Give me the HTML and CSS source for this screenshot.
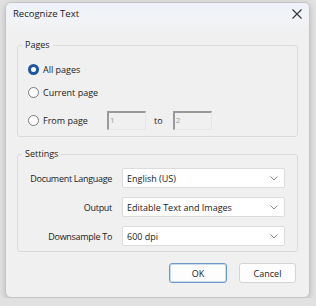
FILE: index.html
```html
<!DOCTYPE html>
<html lang="en">
<head>
    <meta charset="UTF-8">
    <meta name="viewport" content="width=device-width, initial-scale=1.0">
    <title>Recognize Text</title>
    <link rel="stylesheet" href="styles.css">
</head>
<body>
    <div class="window">
        <header class="titlebar">
            <span class="title">Recognize Text</span>
            <svg class="close" width="10" height="10" viewBox="0 0 10 10">
                <path d="M0.5 0.5 L9.5 9.5 M9.5 0.5 L0.5 9.5" stroke="#333" stroke-width="1.1" fill="none"/>
            </svg>
        </header>

        <div class="content">
            <fieldset class="group pages">
                <legend>Pages</legend>
                <div class="radio-row">
                    <span class="radio checked"></span>
                    <span>All pages</span>
                </div>
                <div class="radio-row">
                    <span class="radio"></span>
                    <span>Current page</span>
                </div>
                <div class="radio-row range">
                    <span class="radio"></span>
                    <span class="from-label">From page</span>
                    <span class="num-box">1</span>
                    <span class="to-label">to</span>
                    <span class="num-box">2</span>
                </div>
            </fieldset>

            <fieldset class="group settings">
                <legend>Settings</legend>
                <div class="settings-grid">
                    <label>Document Language</label>
                    <div class="select">
                        <span>English (US)</span>
                        <svg width="8" height="5" viewBox="0 0 8 5"><path d="M0.5 0.5 L4 4 L7.5 0.5" stroke="#888" fill="none"/></svg>
                    </div>

                    <label>Output</label>
                    <div class="select">
                        <span>Editable Text and Images</span>
                        <svg width="8" height="5" viewBox="0 0 8 5"><path d="M0.5 0.5 L4 4 L7.5 0.5" stroke="#888" fill="none"/></svg>
                    </div>

                    <label>Downsample To</label>
                    <div class="select">
                        <span>600 dpi</span>
                        <svg width="8" height="5" viewBox="0 0 8 5"><path d="M0.5 0.5 L4 4 L7.5 0.5" stroke="#888" fill="none"/></svg>
                    </div>
                </div>
            </fieldset>

            <div class="buttons">
                <button class="btn default">OK</button>
                <button class="btn">Cancel</button>
            </div>
        </div>
    </div>
</body>
</html>
```

FILE: styles.css
```css
body {
    margin: 0;
    padding: 2px 0 0 5px;
    background-color: #e1e1e1;
    font-family: "Open Sans", "Noto Sans", sans-serif;
    font-size: 9px;
    color: #1a1a1a;
}

.window {
    width: 303px;
    height: 294px;
    border: 1px solid #c4c4c4;
    border-radius: 6px;
    background: #f0f0f0;
    box-shadow: 0 2px 6px rgba(0, 0, 0, 0.18);
    overflow: hidden;
}

.titlebar {
    height: 27px;
    display: flex;
    align-items: center;
    justify-content: space-between;
    padding: 0 6px 0 7px;
    background: linear-gradient(#eef2f8, #f1f3f6 70%, #f0f0f0);
}

.title {
    font-size: 9.5px;
    margin-top: -6px;
}

.close {
    margin-right: 1px;
    margin-top: -5px;
}

.content {
    padding: 8px 11px 0 11px;
}

.group {
    margin: 0;
    padding: 0 4px 5px 4px;
    border: 1px solid #dadada;
    border-radius: 3px;
}

.group legend {
    padding: 0 3px;
    line-height: 14px;
    color: #222;
}

.pages {
    padding-bottom: 6px;
}

.radio-row {
    display: flex;
    align-items: center;
    height: 20px;
    padding-left: 6px;
    margin-top: 3px;
    white-space: nowrap;
}

.radio-row:first-of-type {
    margin-top: 7px;
}

.radio-row.range {
    margin-top: 8px;
}

.radio {
    width: 9px;
    height: 9px;
    border: 1px solid #7a7a7a;
    border-radius: 50%;
    background: #fff;
    margin-right: 4px;
}

.radio.checked {
    width: 5px;
    height: 5px;
    border: 3px solid #1c56a6;
    background: #fff;
}

.from-label {
    width: 64px;
}

.num-box {
    width: 35px;
    height: 16px;
    border-top: 2px solid #9a9a9a;
    border-left: 2px solid #9a9a9a;
    border-right: 1px solid #e6e6e6;
    border-bottom: 1px solid #e6e6e6;
    background: #f0f0f0;
    color: #9a9a9a;
    font-size: 8px;
    line-height: 14px;
    padding-left: 1px;
}

.to-label {
    margin: 0 10px 0 8px;
}

.settings {
    margin-top: 10px;
}

.settings-grid {
    display: grid;
    grid-template-columns: 90px 163px;
    column-gap: 10px;
    row-gap: 9px;
    align-items: center;
    margin-top: 7px;
}

.settings-grid label {
    text-align: right;
    white-space: nowrap;
    letter-spacing: -0.3px;
}

.select {
    height: 18px;
    display: flex;
    align-items: center;
    justify-content: space-between;
    padding: 0 6px 0 4px;
    background: #fff;
    border: 1px solid #dcdcdc;
    border-radius: 2px;
}

.buttons {
    display: flex;
    justify-content: flex-end;
    gap: 12px;
    margin-top: 11px;
    padding-right: 2px;
}

.btn {
    width: 57px;
    height: 20px;
    font-family: inherit;
    font-size: 9px;
    color: #1a1a1a;
    background: #fdfdfd;
    border: 1px solid #d4d4d4;
    border-radius: 3px;
    padding: 0;
}

.btn.default {
    width: 58px;
    border-color: #6d99c4;
    box-shadow: inset 0 0 0 1px #c9dcef;
}
```
